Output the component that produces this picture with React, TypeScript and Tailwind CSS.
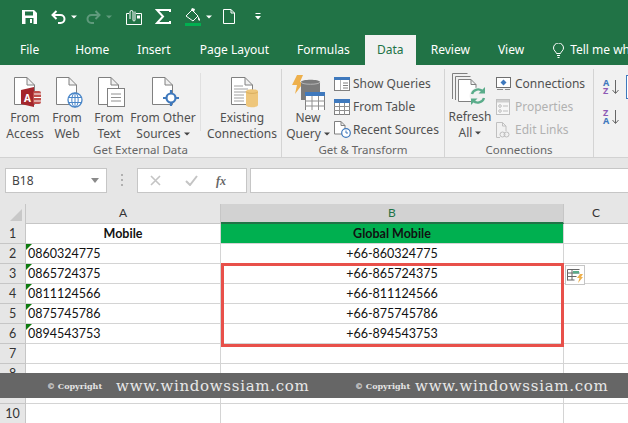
import React from "react";

const ui = { fontFamily: '"Noto Sans", "Open Sans", sans-serif' };
const cellFont = { fontFamily: 'Lato, "Open Sans", sans-serif' };

function Caret({ c = "#444" }: { c?: string }) {
  return (
    <svg width="6" height="4" viewBox="0 0 6 4" className="inline-block">
      <path d="M0 0.5h6L3 3.5z" fill={c} />
    </svg>
  );
}

function Doc({ x = 5, y = 4, w = 21, h = 28 }: { x?: number; y?: number; w?: number; h?: number }) {
  const r = x + w;
  const b = y + h;
  return (
    <path
      d={`M${x + 0.5} ${y + 0.5}H${r - 8}L${r - 0.5} ${y + 8}V${b - 0.5}H${x + 0.5}Z M${r - 8} ${y + 0.5}V${y + 8}H${r - 0.5}`}
      fill="#fff"
      stroke="#808080"
      strokeWidth="1"
    />
  );
}

function IconAccess() {
  return (
    <svg width="32" height="37" viewBox="0 0 32 37">
      <Doc />
      <path d="M12 17l13-3v20l-13-3z" fill="#a4262c" />
      <rect x="24" y="18" width="8" height="13" rx="2" fill="#c0504d" />
      <path d="M25 21h7M25 24.500h7M25 28h7" stroke="#fff" strokeWidth="1" />
      <text x="15" y="28.500" fontSize="10" fontWeight="700" fill="#fff" style={ui}>A</text>
    </svg>
  );
}

function IconWeb() {
  return (
    <svg width="32" height="37" viewBox="0 0 32 37">
      <Doc />
      <circle cx="24" cy="27" r="7" fill="#fff" stroke="#4a86c8" strokeWidth="1.300" />
      <ellipse cx="24" cy="27" rx="3.200" ry="7" fill="none" stroke="#4a86c8" />
      <path d="M17.500 24.500h13M17.500 29.500h13M24 20v14" stroke="#4a86c8" />
    </svg>
  );
}

function IconText() {
  return (
    <svg width="32" height="37" viewBox="0 0 32 37">
      <Doc />
      <rect x="14.500" y="15.500" width="17" height="18" fill="#fff" stroke="#808080" />
      <path d="M18 21h10M18 24.500h10M18 28h10" stroke="#909090" />
    </svg>
  );
}

function IconOther() {
  return (
    <svg width="32" height="37" viewBox="0 0 32 37">
      <Doc />
      <circle cx="24" cy="25" r="4.500" fill="#fff" stroke="#3f79bd" strokeWidth="2.200" />
      <path d="M24 17v3.500M24 29.500V33M16 25h3.500M28.500 25H32" stroke="#3f79bd" strokeWidth="2.200" />
    </svg>
  );
}

function IconExisting() {
  return (
    <svg width="32" height="37" viewBox="0 0 32 37">
      <Doc w={22} />
      <path d="M8 13h9M8 16h14M8 19h14M8 22h10M8 25h10M8 28h10" stroke="#a0a0a0" />
      <path d="M20 18.500c0-3 12-3 12 0V32c0 3-12 3-12 0z" fill="#eec67b" />
      <path d="M20 18.500c0 2.500 12 2.500 12 0" fill="none" stroke="#d9ae5e" />
    </svg>
  );
}

function IconNewQuery() {
  return (
    <svg width="36" height="37" viewBox="0 0 36 37">
      <path d="M7 2h6l-3 7h4L5 21l2-9H2z" fill="#eeb04c" />
      <path d="M11 9c0-3 19-3 19 0v18H11z" fill="#7b7b7b" />
      <path d="M11 9c0 3 19 3 19 0" fill="none" stroke="#b5b5b5" />
      <rect x="15.500" y="19.500" width="19" height="18" fill="#fff" stroke="#808080" />
      <rect x="15" y="19" width="20" height="4" fill="#3f79bd" />
      <path d="M15 28h20M15 33h20M22 23v14M28.500 23v14" stroke="#909090" />
    </svg>
  );
}

function IconShow() {
  return (
    <svg width="16" height="15" viewBox="0 0 16 15">
      <rect x="0.500" y="0.500" width="15" height="13" fill="#fff" stroke="#808080" />
      <rect x="0" y="0" width="16" height="3" fill="#3f79bd" />
      <path d="M9 6h5M9 8.500h5M9 11h5" stroke="#808080" />
      <path d="M6.500 3v10" stroke="#b5b5b5" />
    </svg>
  );
}

function IconTable() {
  return (
    <svg width="16" height="16" viewBox="0 0 16 16">
      <rect x="0.500" y="0.500" width="15" height="15" fill="#fff" stroke="#808080" />
      <rect x="0" y="0" width="16" height="4" fill="#3f79bd" />
      <path d="M0 7.500h16M0 11.500h16M5.500 4v12M10.500 4v12" stroke="#909090" />
    </svg>
  );
}

function IconRecent() {
  return (
    <svg width="17" height="17" viewBox="0 0 17 17">
      <path d="M0.500 0.500H7L11 4.500V13H0.500Z M7 0.500V4.500H11" fill="#fff" stroke="#808080" />
      <circle cx="12" cy="12" r="4.300" fill="#fff" stroke="#3f79bd" strokeWidth="1.200" />
      <path d="M12 9.500V12h2" fill="none" stroke="#3f79bd" />
    </svg>
  );
}

function IconRefresh() {
  return (
    <svg width="36" height="33" viewBox="0 0 36 33">
      <path d="M0.500 26V0.500h15" fill="none" stroke="#808080" />
      <path d="M3.500 27V3.500h15" fill="none" stroke="#808080" />
      <path d="M6.500 6.500H19L24 11.500V28.500H6.500Z M19 6.500V11.500H24" fill="#fff" stroke="#808080" />
      <circle cx="26" cy="23" r="8.500" fill="#f1f1f1" />
      <path d="M20 21a6.500 6.500 0 0 1 11-2.500" fill="none" stroke="#5aac8a" strokeWidth="2.400" />
      <path d="M33 14v6.500h-6.500z" fill="#5aac8a" />
      <path d="M32 25a6.500 6.500 0 0 1-11 2.500" fill="none" stroke="#5aac8a" strokeWidth="2.400" />
      <path d="M19 32v-6.500h6.500z" fill="#5aac8a" />
    </svg>
  );
}

function IconConnections() {
  return (
    <svg width="16" height="14" viewBox="0 0 16 14">
      <rect x="0.500" y="0.500" width="14" height="10" fill="#fff" stroke="#6f6f6f" />
      <path d="M7.500 2.500l3 3-3 3-3-3z" fill="#3f79bd" />
      <path d="M1 12.500h6M9 12.500h5" stroke="#8a8a8a" />
    </svg>
  );
}

function IconProperties() {
  return (
    <svg width="15" height="16" viewBox="0 0 15 16">
      <rect x="0.500" y="0.500" width="13" height="15" fill="#f7f7f7" stroke="#c0c0c0" />
      <rect x="1" y="1" width="12" height="2.500" fill="#cfcfcf" />
      <circle cx="4" cy="7" r="1.300" fill="none" stroke="#bdbdbd" />
      <circle cx="4" cy="12" r="1.300" fill="none" stroke="#bdbdbd" />
      <path d="M7 7h5M7 12h5" stroke="#bdbdbd" />
    </svg>
  );
}

function IconEditLinks() {
  return (
    <svg width="14" height="16" viewBox="0 0 14 16">
      <path d="M0.500 0.500H6.500L10 4V9M4 15.500H0.500V0.500M6.500 0.500V4H10" fill="none" stroke="#c0c0c0" />
      <circle cx="6.500" cy="12.500" r="2.500" fill="none" stroke="#bdbdbd" />
      <circle cx="10.500" cy="12.500" r="2.500" fill="none" stroke="#bdbdbd" />
    </svg>
  );
}

function IconSort({ top, bottom, topC, bottomC }: { top: string; bottom: string; topC: string; bottomC: string }) {
  return (
    <div className="relative flex h-[17px] w-[16px] items-start">
      <div className="flex w-[9px] flex-col text-[9px] font-bold leading-[8px]" style={ui}>
        <span style={{ color: topC }}>{top}</span>
        <span style={{ color: bottomC }}>{bottom}</span>
      </div>
      <svg width="7" height="16" viewBox="0 0 7 16">
        <path d="M3.500 1v13M0.500 11l3 3.500 3-3.500" fill="none" stroke="#666" />
      </svg>
    </div>
  );
}

function Big({ w, label1, label2, caret, children }: { w: number; label1: string; label2: string; caret?: boolean; children: React.ReactNode }) {
  return (
    <div className="flex shrink-0 flex-col items-center" style={{ width: w }}>
      <div className="flex h-[37px] items-start justify-center">{children}</div>
      <div className="whitespace-nowrap text-center text-[12px] leading-[16px] text-[#505050]">
        <div>{label1}</div>
        <div className="flex items-center justify-center gap-[3px]">
          {label2}
          {caret && <Caret />}
        </div>
      </div>
    </div>
  );
}

function Small({ icon, label, off }: { icon: React.ReactNode; label: string; off?: boolean }) {
  return (
    <div className="flex h-[23px] items-center">
      <div className="flex w-[19px] shrink-0 items-center">{icon}</div>
      <span className={off ? "whitespace-nowrap text-[12px] text-[#b1b1b1]" : "whitespace-nowrap text-[12px] text-[#505050]"}>{label}</span>
    </div>
  );
}

function Group({ w, label, children }: { w: number; label?: string; children: React.ReactNode }) {
  return (
    <div className="relative flex h-[88px] shrink-0 flex-col border-r border-[#d4d4d4]" style={{ width: w }}>
      <div className="flex h-[72px] pt-[4px]">{children}</div>
      <div className="pt-[1px] text-center text-[11.500px] leading-[15px] text-[#666666]">{label}</div>
    </div>
  );
}

function Tab({ ml, label }: { ml: number; label: string }) {
  return (
    <span className="shrink-0 whitespace-nowrap text-[12px] text-white" style={{ marginLeft: ml }}>
      {label}
    </span>
  );
}

function Triangle() {
  return (
    <svg width="6" height="6" viewBox="0 0 6 6" className="absolute left-0 top-0">
      <path d="M0 0h6L0 6z" fill="#0f7b0f" />
    </svg>
  );
}

function Row({ n, a, b, tri, bold, green }: { n: number; a?: string; b?: string; tri?: boolean; bold?: boolean; green?: boolean }) {
  return (
    <div className="flex h-[20px] shrink-0 text-[12.500px] leading-[20px] text-[#111]" style={cellFont}>
      <div className="w-[26px] shrink-0 border-b border-r border-[#c6c6c6] bg-[#e6e6e6] text-center text-[#333]" >{n}</div>
      <div className={bold ? "relative w-[195px] shrink-0 border-b border-r border-[#d4d4d4] bg-white text-center font-bold" : "relative w-[195px] shrink-0 border-b border-r border-[#d4d4d4] bg-white pl-[2px]"}>
        {tri && <Triangle />}
        {a}
      </div>
      <div className={green ? "w-[343px] shrink-0 border-b border-r border-[#d4d4d4] bg-[#00b050] text-center font-bold" : "w-[343px] shrink-0 border-b border-r border-[#d4d4d4] bg-white text-center"}>
        {b}
      </div>
      <div className="flex-1 border-b border-[#d4d4d4] bg-white" />
    </div>
  );
}

function Stamp() {
  return (
    <>
      <span className="whitespace-nowrap text-[8px] font-bold text-[#e4e4e4]" style={{ fontFamily: '"DejaVu Serif", serif' }}>© Copyright</span>
      <span className="whitespace-nowrap text-[15px] leading-[22px] tracking-[0.7px] text-[#e8e8e8]" style={{ fontFamily: '"DejaVu Serif", serif' }}>www.windowssiam.com</span>
    </>
  );
}

export default function App() {
  const data = [
    ["0860324775", "+66-860324775"],
    ["0865724375", "+66-865724375"],
    ["0811124566", "+66-811124566"],
    ["0875745786", "+66-875745786"],
    ["0894543753", "+66-894543753"],
  ];
  return (
    <div className="relative flex h-[423px] w-[628px] flex-col overflow-hidden bg-white" style={ui}>
      {/* Title / quick access */}
      <div className="flex h-[35px] shrink-0 items-center bg-[#217346] pb-[2px]">
        <svg width="15" height="14" viewBox="0 0 15 14" className="ml-[22px]">
          <path d="M0 0h12l3 3v11H0z" fill="#fff" />
          <rect x="3" y="1.500" width="8" height="4" fill="#217346" />
          <rect x="3.500" y="8" width="8" height="6" fill="#217346" />
          <rect x="8" y="9" width="2" height="4" fill="#fff" />
        </svg>
        <svg width="15" height="14" viewBox="0 0 15 14" className="ml-[14px]">
          <path d="M5.500 1L1.500 5l4 4" fill="none" stroke="#fff" strokeWidth="2" />
          <path d="M2 5h7.500a4 4 0 0 1 0 8H7" fill="none" stroke="#fff" strokeWidth="2" />
        </svg>
        <span className="ml-[5px] flex"><Caret c="#fff" /></span>
        <svg width="15" height="14" viewBox="0 0 15 14" className="ml-[9px]">
          <path d="M9.500 1l4 4-4 4" fill="none" stroke="#5f9a7c" strokeWidth="2" />
          <path d="M13 5H5.500a4 4 0 0 0 0 8H8" fill="none" stroke="#5f9a7c" strokeWidth="2" />
        </svg>
        <span className="ml-[5px] flex"><Caret c="#5f9a7c" /></span>
        <svg width="16" height="16" viewBox="0 0 16 16" className="ml-[14px]">
          <path d="M0.500 4.500h2.500M10 4.500h5.500v11H0.500v-11" fill="none" stroke="#fff" />
          <path d="M4 10V3a1.500 1.500 0 0 1 3 0v8a1 1 0 0 0 2 0V2.500" fill="none" stroke="#fff" />
          <rect x="11" y="6.500" width="3" height="3" fill="#fff" />
        </svg>
        <svg width="16" height="15" viewBox="0 0 16 15" className="ml-[13px]">
          <path d="M15 3V1H2l6 6.500L2 14h13v-2" fill="none" stroke="#fff" strokeWidth="2" />
        </svg>
        <svg width="17" height="18" viewBox="0 0 17 18" className="ml-[14px]">
          <path d="M1 8l6-6 6 6-5 5z" fill="none" stroke="#fff" />
          <path d="M6 2l1-2 3 1-1 3zM13 8c1 2 2.500 3 2 4.500-1 .5-2-.5-2-1.500z" fill="#fff" />
          <rect x="0" y="15" width="16" height="3" fill="#00b050" />
        </svg>
        <span className="ml-[4px] flex"><Caret c="#fff" /></span>
        <svg width="12" height="15" viewBox="0 0 12 15" className="ml-[11px]">
          <path d="M0.500 0.500H8L11.500 4V14.500H0.500Z M8 0.500V4H11.500" fill="none" stroke="#fff" />
        </svg>
        <svg width="6" height="7" viewBox="0 0 6 7" className="ml-[20px]">
          <path d="M0.500 0.500h5" stroke="#fff" />
          <path d="M0 3h6L3 6.500z" fill="#fff" />
        </svg>
      </div>
      {/* Tabs */}
      <div className="flex h-[30px] shrink-0 items-center bg-[#217346]">
        <Tab ml={20} label="File" />
        <Tab ml={36} label="Home" />
        <Tab ml={28} label="Insert" />
        <Tab ml={29} label="Page Layout" />
        <Tab ml={28} label="Formulas" />
        <span className="ml-[15px] flex h-[30px] w-[51px] shrink-0 items-center justify-center bg-[#f1f1f1] text-[12px] text-[#217346]">Data</span>
        <Tab ml={15} label="Review" />
        <Tab ml={28} label="View" />
        <svg width="11" height="15" viewBox="0 0 11 15" className="ml-[29px] shrink-0">
          <path d="M3.500 10.500C3 8.500.5 7.500.5 5a5 5 0 0 1 10 0c0 2.500-2.500 3.500-3 5.500zM4 12.500h3M4.500 14.500h2" fill="none" stroke="#fff" />
        </svg>
        <Tab ml={6} label="Tell me what you" />
      </div>
      {/* Ribbon */}
      <div className="flex h-[93px] shrink-0 items-start overflow-hidden border-b border-[#d2d2d2] bg-[#f1f1f1] pt-[4px]">
        <Group w={282} label="Get External Data">
          <div className="w-[4px] shrink-0" />
          <Big w={42} label1="From" label2="Access"><IconAccess /></Big>
          <Big w={42} label1="From" label2="Web"><IconWeb /></Big>
          <Big w={42} label1="From" label2="Text"><IconText /></Big>
          <Big w={66} label1="From Other" label2="Sources" caret><IconOther /></Big>
          <div className="mx-[4px] h-[58px] w-px shrink-0 bg-[#e0e0e0]" />
          <Big w={74} label1="Existing" label2="Connections"><IconExisting /></Big>
        </Group>
        <Group w={163} label="Get & Transform">
          <div className="w-[4px] shrink-0" />
          <Big w={44} label1="New" label2="Query" caret><IconNewQuery /></Big>
          <div className="ml-[4px] flex flex-col">
            <Small icon={<IconShow />} label="Show Queries" />
            <Small icon={<IconTable />} label="From Table" />
            <Small icon={<IconRecent />} label="Recent Sources" />
          </div>
        </Group>
        <Group w={149} label="Connections">
          <div className="w-[5px] shrink-0" />
          <Big w={40} label1="Refresh" label2="All" caret><IconRefresh /></Big>
          <div className="ml-[6px] flex flex-col">
            <Small icon={<IconConnections />} label="Connections" />
            <Small off icon={<IconProperties />} label="Properties" />
            <Small off icon={<IconEditLinks />} label="Edit Links" />
          </div>
        </Group>
        <div className="flex h-[72px] shrink-0 items-start pl-[9px] pt-[10px]">
          <div className="flex flex-col gap-[13px]">
            <IconSort top="A" bottom="Z" topC="#3f79bd" bottomC="#8e5bb5" />
            <IconSort top="Z" bottom="A" topC="#8e5bb5" bottomC="#3f79bd" />
          </div>
          <div className="ml-[7px] -mt-[4px] h-[24px] w-[8px] border border-[#3f79bd] bg-white" />
        </div>
      </div>
      {/* Formula bar */}
      <div className="flex h-[46px] shrink-0 items-start bg-[#e6e6e6] pt-[10px]">
        <div className="ml-[5px] flex h-[25px] w-[102px] items-center justify-between border border-[#c6c6c6] bg-white pl-[6px] pr-[7px] text-[12px] text-[#444]">
          B18
          <svg width="8" height="5" viewBox="0 0 8 5"><path d="M0 0h8L4 5z" fill="#8a8a8a" /></svg>
        </div>
        <div className="ml-[14px] mt-[6px] flex h-[12px] w-[3px] flex-col justify-between">
          <div className="h-[2px] w-[2px] bg-[#b0b0b0]" />
          <div className="h-[2px] w-[2px] bg-[#b0b0b0]" />
          <div className="h-[2px] w-[2px] bg-[#b0b0b0]" />
        </div>
        <div className="ml-[13px] flex h-[25px] w-[110px] items-center border border-[#c6c6c6] bg-white">
          <svg width="11" height="11" viewBox="0 0 11 11" className="ml-[12px]"><path d="M1 1l9 9M10 1l-9 9" stroke="#c4c4c4" strokeWidth="1.600" /></svg>
          <svg width="13" height="11" viewBox="0 0 13 11" className="ml-[24px]"><path d="M1 6l4 4 7-9" fill="none" stroke="#c4c4c4" strokeWidth="2" /></svg>
          <span className="ml-[18px] text-[12px] font-bold italic text-[#666]" style={{ fontFamily: '"Liberation Serif", serif' }}>fx</span>
        </div>
        <div className="ml-[3px] h-[25px] flex-1 border-y border-l border-[#c6c6c6] bg-white" />
      </div>
      {/* Column heads */}
      <div className="flex h-[20px] shrink-0 text-[12px] leading-[18px] text-[#333]" style={cellFont}>
        <div className="relative w-[26px] shrink-0 border-r border-[#c6c6c6] bg-[#e6e6e6]">
          <svg width="12" height="12" viewBox="0 0 12 12" className="absolute bottom-[3px] right-[3px]"><path d="M12 0v12H0z" fill="#c8c8c8" /></svg>
        </div>
        <div className="w-[195px] shrink-0 border-b border-r border-[#c6c6c6] bg-[#e6e6e6] text-center">A</div>
        <div className="w-[343px] shrink-0 border-b-2 border-r border-b-[#217346] border-r-[#c6c6c6] bg-[#d2d2d2] text-center text-[#217346]">B</div>
        <div className="flex-1 border-b border-[#c6c6c6] bg-[#e6e6e6] text-center">C</div>
      </div>
      {/* Grid */}
      <Row n={1} a="Mobile" b="Global Mobile" bold green />
      {data.map((d, i) => (
        <Row key={d[0]} n={i + 2} a={d[0]} b={d[1]} tri />
      ))}
      <Row n={7} />
      <Row n={8} />
      <Row n={9} />
      <Row n={10} />

      {/* Selection highlight */}
      <div className="absolute left-[221px] top-[263px] h-[84px] w-[343px] border-[3px] border-[#e8504a]" />
      {/* Quick analysis */}
      <div className="absolute left-[565px] top-[265px] flex h-[20px] w-[20px] items-center justify-center border border-[#c6c6c6] bg-white">
        <svg width="16" height="15" viewBox="0 0 16 15">
          <path d="M0.500 1.500h12M0.500 5h12M0.500 8.500h9M0.500 12h7M0.500 1.500v11M5 1.500V12" fill="none" stroke="#666" />
          <rect x="6" y="3" width="6" height="2.500" fill="#5aac8a" />
          <path d="M13 6h3l-2 3h2l-5 6 1.500-5H10z" fill="#eeb04c" />
        </svg>
      </div>
      {/* Watermark */}
      <div className="absolute left-0 top-[373px] flex h-[25px] w-full items-center bg-[#666666]">
        <div className="ml-[47px] flex w-[308px] shrink-0 items-center gap-[14px]"><Stamp /></div>
        <div className="flex shrink-0 items-center gap-[5px]"><Stamp /></div>
      </div>
    </div>
  );
}
